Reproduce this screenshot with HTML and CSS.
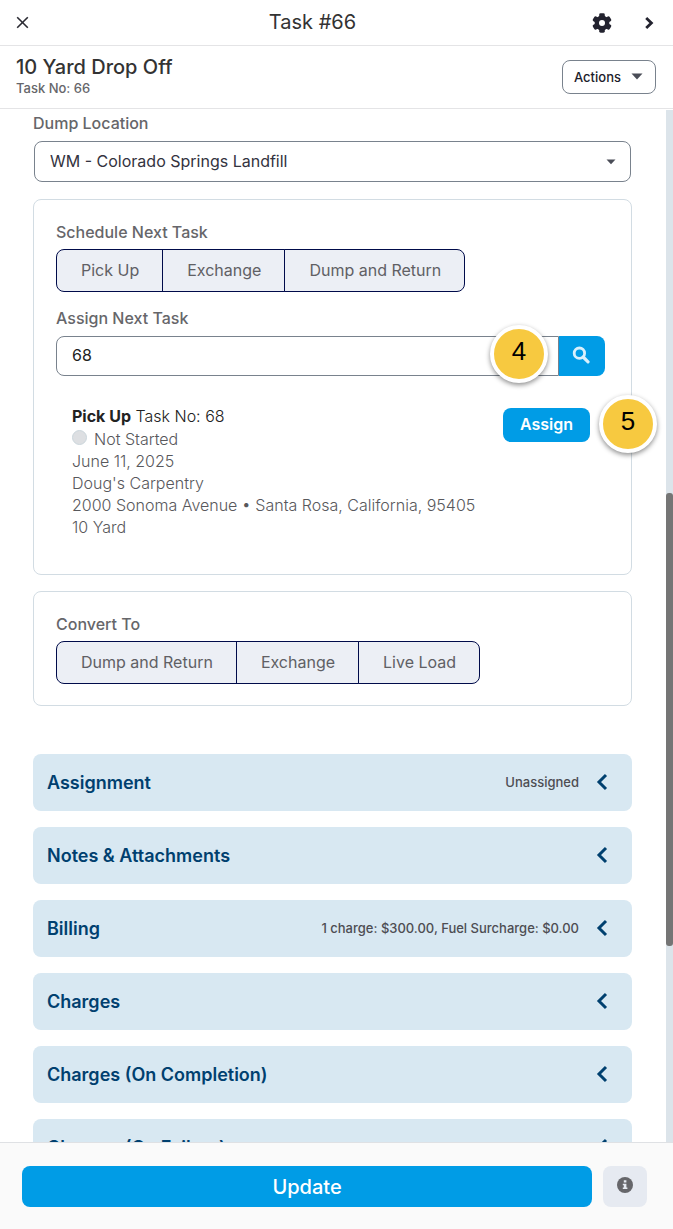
FILE: index.html
```
<!DOCTYPE html>
<html lang="en">
<head>
<meta charset="utf-8">
<meta name="viewport" content="width=device-width, initial-scale=1">
<title>Task #66</title>
<link rel="stylesheet" href="styles.css">
</head>
<body>
<div class="panel">
  <header class="topbar">
    <button class="icon-btn" type="button" aria-label="Close">
      <svg width="13" height="13" viewBox="0 0 13 13"><path d="M1.2 1.2 11.8 11.8M11.8 1.2 1.2 11.8" fill="none" stroke="#2b2b33" stroke-width="1.6"/></svg>
    </button>
    <h1 class="topbar-title">Task #66</h1>
    <div class="topbar-tools">
      <button class="icon-btn" type="button" aria-label="Settings">
        <svg width="20" height="20" viewBox="0 0 20 20"><g fill="#23232f"><circle cx="10" cy="10" r="7.4"/><rect x="7.2" y="0.3" width="5.6" height="19.4" rx="1.4"/><rect x="7.2" y="0.3" width="5.6" height="19.4" rx="1.4" transform="rotate(60 10 10)"/><rect x="7.2" y="0.3" width="5.6" height="19.4" rx="1.4" transform="rotate(120 10 10)"/></g><circle cx="10" cy="10" r="3" fill="#fff"/></svg>
      </button>
      <button class="icon-btn" type="button" aria-label="Next task">
        <svg width="10" height="14" viewBox="0 0 10 14"><path d="M2.2 2 7.4 7 2.2 12" fill="none" stroke="#23232f" stroke-width="2.8"/></svg>
      </button>
    </div>
  </header>

  <div class="subheader">
    <div class="task-heading">
      <h2 class="task-name">10 Yard Drop Off</h2>
      <p class="task-no">Task No: 66</p>
    </div>
    <button class="actions-btn" type="button">Actions
      <svg width="12" height="7" viewBox="0 0 12 7"><path d="M0.5 0.5h11L6 6.5z" fill="#4a4d57"/></svg>
    </button>
  </div>

  <div class="body">
    <main class="content">
      <label class="label" for="dump">Dump Location</label>
      <div class="select-wrap">
        <select class="select" id="dump"><option>WM - Colorado Springs Landfill</option></select>
        <svg class="select-caret" width="10" height="6" viewBox="0 0 10 6"><path d="M0.5 0.5h9L5 5.3z" fill="#4a4d57"/></svg>
      </div>

      <section class="card card-schedule">
        <h3 class="label">Schedule Next Task</h3>
        <div class="btn-group">
          <button type="button">Pick Up</button><button type="button">Exchange</button><button type="button">Dump and Return</button>
        </div>
        <label class="label label-assign" for="next">Assign Next Task</label>
        <div class="search">
          <input class="search-input" id="next" type="text" value="68">
          <button class="search-btn" type="button" aria-label="Search">
            <svg width="18" height="18" viewBox="0 0 18 18"><circle cx="7.4" cy="7.2" r="5.2" fill="none" stroke="#d9f0fc" stroke-width="2.8"/><path d="M11.2 11 16 15.8" stroke="#d9f0fc" stroke-width="3.2" stroke-linecap="round"/></svg>
          </button>
          <span class="step step-search">4</span>
        </div>
        <div class="result">
          <div class="result-info">
            <p class="result-title"><strong>Pick Up</strong> Task No: 68</p>
            <p class="result-status"><span class="dot"></span>Not Started</p>
            <p>June 11, 2025</p>
            <p>Doug's Carpentry</p>
            <p>2000 Sonoma Avenue • Santa Rosa, California, 95405</p>
            <p>10 Yard</p>
          </div>
          <div class="assign">
            <button class="assign-btn" type="button">Assign</button>
            <span class="step step-assign">5</span>
          </div>
        </div>
      </section>

      <section class="card card-convert">
        <h3 class="label">Convert To</h3>
        <div class="btn-group">
          <button type="button">Dump and Return</button><button type="button">Exchange</button><button type="button">Live Load</button>
        </div>
      </section>

      <div class="accordion">
        <button class="section" type="button"><span class="section-name">Assignment</span><span class="section-note">Unassigned</span><svg class="chev" width="12" height="18" viewBox="0 0 12 18"><path d="M10 2 3 9l7 7" /></svg></button>
        <button class="section" type="button"><span class="section-name">Notes &amp; Attachments</span><svg class="chev" width="12" height="18" viewBox="0 0 12 18"><path d="M10 2 3 9l7 7" /></svg></button>
        <button class="section" type="button"><span class="section-name">Billing</span><span class="section-note">1 charge: $300.00, Fuel Surcharge: $0.00</span><svg class="chev" width="12" height="18" viewBox="0 0 12 18"><path d="M10 2 3 9l7 7" /></svg></button>
        <button class="section" type="button"><span class="section-name">Charges</span><svg class="chev" width="12" height="18" viewBox="0 0 12 18"><path d="M10 2 3 9l7 7" /></svg></button>
        <button class="section" type="button"><span class="section-name">Charges (On Completion)</span><svg class="chev" width="12" height="18" viewBox="0 0 12 18"><path d="M10 2 3 9l7 7" /></svg></button>
        <button class="section" type="button"><span class="section-name">Charges (On Failure)</span><svg class="chev" width="12" height="18" viewBox="0 0 12 18"><path d="M10 2 3 9l7 7" /></svg></button>
      </div>
    </main>
    <div class="scrollbar"><div class="thumb"></div></div>
  </div>

  <footer class="footer">
    <button class="update-btn" type="button">Update</button>
    <button class="info-btn" type="button" aria-label="Information">
      <svg width="16" height="16" viewBox="0 0 16 16"><circle cx="8" cy="8" r="8" fill="#66666a"/><path d="M6.8 3.2h2.6v2.4H6.8zM5.8 6.8h3.6v3.8h1V12H5.8v-1.4h1V8.2h-1z" fill="#e6eaf1"/></svg>
    </button>
  </footer>
</div>
</body>
</html>
```
FILE: styles.css
```
* { box-sizing: border-box; }

body {
  margin: 0;
  background: #fff;
  color: #333;
  font-family: Inter, "Liberation Sans", sans-serif;
  font-size: 16px;
}

h1, h2, h3, p { margin: 0; }

button, input, select { font: inherit; }

button { cursor: pointer; }

svg { display: block; flex: none; }

.panel {
  display: flex;
  flex-direction: column;
  height: 100vh;
}

.topbar {
  display: grid;
  grid-template-columns: 1fr auto 1fr;
  align-items: center;
  height: 46px;
  padding: 0 19px 0 16px;
  border-bottom: 1px solid #e4e4e6;
}

.topbar-title {
  padding: 0 45px 2px 0;
  font-size: 20px;
  font-weight: 400;
  line-height: 24px;
}

.topbar-tools {
  display: flex;
  align-items: center;
  justify-content: flex-end;
  gap: 32px;
}

.icon-btn {
  justify-self: start;
  padding: 0;
  border: 0;
  background: none;
}

.subheader {
  display: flex;
  align-items: center;
  justify-content: space-between;
  height: 63px;
  padding: 0 17px 0 16px;
  border-bottom: 1px solid #e4e4e6;
}

.task-heading { padding-bottom: 2px; }

.task-name {
  font-size: 20px;
  font-weight: 500;
  line-height: 24px;
}

.task-no {
  color: #66666a;
  font-size: 13px;
  font-weight: 500;
  line-height: 18px;
}

.actions-btn {
  display: flex;
  align-items: center;
  gap: 10px;
  height: 34px;
  padding: 0 12px 1px 11px;
  border: 1px solid #79828d;
  border-radius: 8px;
  background: #fff;
  color: #1c1c2b;
  font-size: 13px;
  font-weight: 500;
}

.body {
  display: flex;
  flex: 1;
  min-height: 0;
}

.content {
  flex: 1;
  min-width: 0;
  padding: 4px 34px 0 33px;
  overflow: hidden;
}

.scrollbar {
  display: flex;
  flex-direction: column;
  width: 7px;
  margin-top: 1px;
  background: #dce4ea;
}

.scrollbar::before { content: ""; flex: 383; }

.scrollbar::after { content: ""; flex: 196; }

.thumb {
  flex: 453;
  border-radius: 3px;
  background: #757575;
}

.label {
  display: block;
  color: #66666a;
  font-size: 16px;
  font-weight: 500;
  line-height: 20px;
}

.select-wrap {
  position: relative;
  margin: 8px 1px 0;
}

.select {
  display: block;
  width: 100%;
  height: 41px;
  padding: 0 15px 2px;
  border: 1px solid #79828d;
  border-radius: 8px;
  background: #fff;
  color: #333340;
  appearance: none;
}

.select-caret {
  position: absolute;
  top: 18px;
  right: 15px;
  pointer-events: none;
}

.card {
  padding: 22px;
  border: 1px solid #d2dce3;
  border-radius: 8px;
}

.card-schedule {
  margin-top: 17px;
  padding-bottom: 36px;
}

.card-convert {
  margin-top: 16px;
  padding-bottom: 21px;
}

.btn-group {
  display: flex;
  margin-top: 7px;
}

.btn-group button {
  height: 43px;
  margin-left: -1px;
  padding: 0 23px 2px 24px;
  border: 1px solid #000b4a;
  background: #eceff5;
  color: #606064;
}

.btn-group button:first-child {
  margin-left: 0;
  border-radius: 8px 0 0 8px;
}

.btn-group button:last-child { border-radius: 0 8px 8px 0; }

.label-assign { margin-top: 16px; }

.search {
  position: relative;
  display: flex;
  margin-top: 8px;
  margin-right: 4px;
}

.search-input {
  flex: 1;
  min-width: 0;
  height: 40px;
  padding: 0 15px 2px;
  border: 1px solid #79828d;
  border-radius: 8px 0 0 8px;
  background: #fff;
  color: #222;
}

.search-btn {
  display: flex;
  align-items: center;
  justify-content: center;
  width: 46px;
  padding: 0 2px 2px 0;
  border: 0;
  border-radius: 0 8px 8px 0;
  background: #009ce6;
}

.step {
  position: absolute;
  width: 58px;
  height: 58px;
  border: 4px solid #fff;
  border-radius: 50%;
  background: #f7c940;
  box-shadow: 0 2px 5px rgba(0, 0, 0, 0.45);
  color: #000;
  font-family: "Liberation Sans", sans-serif;
  font-size: 26px;
  line-height: 45px;
  text-align: center;
}

.step-search {
  top: -11px;
  right: 57px;
}

.step-assign {
  top: -13px;
  left: 96px;
}

.result {
  display: flex;
  align-items: flex-start;
  justify-content: space-between;
  margin-top: 29px;
  padding: 0 19px 0 16px;
}

.result-info {
  color: #58585c;
  font-weight: 300;
  line-height: 22px;
}

.result-title { color: #222; }

.result-title strong { font-weight: 700; }

.result-status {
  display: flex;
  align-items: center;
  gap: 7px;
  height: 23px;
}

.dot {
  width: 15px;
  height: 15px;
  margin-bottom: 2px;
  border: 1px solid #cbd6dc;
  border-radius: 50%;
  background: #dddfe2;
}

.assign {
  position: relative;
  margin-top: 3px;
}

.assign-btn {
  display: block;
  height: 34px;
  padding: 0 17px 2px;
  border: 0;
  border-radius: 8px;
  background: #009ce6;
  color: #fff;
  font-weight: 600;
}

.accordion {
  display: grid;
  gap: 16px;
  margin-top: 48px;
}

.section {
  display: flex;
  align-items: center;
  gap: 17px;
  height: 57px;
  padding: 0 24px 1px 14px;
  border: 0;
  border-radius: 8px;
  background: #d8e8f2;
  color: #00406f;
  text-align: left;
}

.section-name {
  flex: 1;
  font-size: 18px;
  font-weight: 600;
}

.section-note {
  color: #4d4d52;
  font-size: 13px;
  font-weight: 500;
}

.chev {
  fill: none;
  stroke: #00406f;
  stroke-width: 3;
}

.footer {
  display: flex;
  gap: 11px;
  height: 87px;
  padding: 23px 26px 22px 22px;
  border-top: 1px solid #dfe1e4;
  background: #fafafa;
}

.update-btn {
  flex: 1;
  height: 41px;
  border: 0;
  border-radius: 8px;
  background: #009ce6;
  color: #fff;
  font-size: 20px;
  font-weight: 500;
}

.info-btn {
  display: flex;
  justify-content: center;
  width: 44px;
  height: 41px;
  padding: 11px 0 0;
  border: 0;
  border-radius: 8px;
  background: #e6eaf1;
}
```
